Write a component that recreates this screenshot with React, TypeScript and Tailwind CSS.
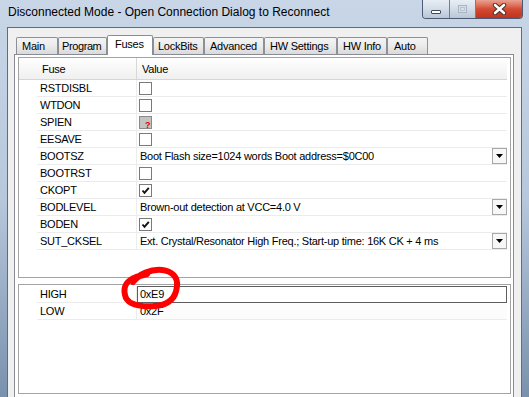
import React from 'react';

type FuseRow = {
  name: string;
  kind: 'check' | 'select' | 'unknown';
  checked?: boolean;
  text?: string;
};

const fuses: FuseRow[] = [
  { name: 'RSTDISBL', kind: 'check', checked: false },
  { name: 'WTDON', kind: 'check', checked: false },
  { name: 'SPIEN', kind: 'unknown' },
  { name: 'EESAVE', kind: 'check', checked: false },
  { name: 'BOOTSZ', kind: 'select', text: 'Boot Flash size=1024 words Boot address=$0C00' },
  { name: 'BOOTRST', kind: 'check', checked: false },
  { name: 'CKOPT', kind: 'check', checked: true },
  { name: 'BODLEVEL', kind: 'select', text: 'Brown-out detection at VCC=4.0 V' },
  { name: 'BODEN', kind: 'check', checked: true },
  { name: 'SUT_CKSEL', kind: 'select', text: 'Ext. Crystal/Resonator High Freq.; Start-up time: 16K CK + 4 ms' },
];

const tabs = [
  { label: 'Main', width: 'w-[42px] pl-[5px]' },
  { label: 'Program', width: 'w-[49px] pl-[3px] tracking-[-0.4px]' },
  { label: 'Fuses', width: 'w-[46px] pl-[7px]', active: true },
  { label: 'LockBits', width: 'w-[51px] pl-[4px]' },
  { label: 'Advanced', width: 'w-[60px] pl-[5px]' },
  { label: 'HW Settings', width: 'w-[73px] pl-[5px]' },
  { label: 'HW Info', width: 'w-[50px] pl-[5px]' },
  { label: 'Auto', width: 'w-[41px] pl-[6px]' },
];

const CheckBox: React.FC<{ checked?: boolean; unknown?: boolean }> = ({ checked, unknown }) => (
  <div
    className={`relative mt-[2px] ml-[2px] h-[13px] w-[13px] border ${
      unknown ? 'border-[#8a8a8a] bg-[#c3c3c3]' : 'border-[#7a7a7a] bg-white'
    }`}
  >
    {checked && (
      <svg width="11" height="11" viewBox="0 0 11 11" className="absolute left-0 top-0">
        <path d="M2.5 5.5 L4.5 7.8 L8.8 2.8" fill="none" stroke="#111" strokeWidth="1.9" />
      </svg>
    )}
    {unknown && (
      <span className="absolute left-[5px] top-[4px] text-[9px] font-bold leading-[9px] text-[#e00000]">?</span>
    )}
  </div>
);

const DropButton: React.FC = () => (
  <div className="flex h-[16px] w-[15px] shrink-0 items-center justify-center border border-[#a8a8a8] bg-[#f7f7f7]">
    <svg width="7" height="4" viewBox="0 0 7 4">
      <path d="M0 0 H7 L3.5 4 Z" fill="#000" />
    </svg>
  </div>
);

const GridRow: React.FC<{ name: string; children: React.ReactNode; plain?: boolean }> = ({ name, children, plain }) => (
  <div className="flex h-[17px]">
    <div className="w-[18px] shrink-0" />
    <div className="w-[99px] shrink-0 border-b border-[#ececec] pl-[3px] leading-[16px]">{name}</div>
    <div className="w-px shrink-0 bg-[#ececec]" />
    <div className={`relative w-[370px] shrink-0 ${plain ? '' : 'border-b border-[#ececec]'}`}>{children}</div>
  </div>
);

const App: React.FC = () => {
  return (
    <div className="relative h-[397px] w-[529px] overflow-hidden bg-gradient-to-b from-[#c8d6e7] via-[#b7c8dc] to-[#7a91ad] font-['Liberation_Sans',Arial,sans-serif] text-[11px] tracking-[-0.25px] text-black">
      {/* Title bar */}
      <div className="flex h-[27px]">
        <div className="flex-1 pl-[8px] pt-[4px] text-[12px] leading-[17px] tracking-normal text-black">
          Disconnected Mode - Open Connection Dialog to Reconnect
        </div>
        <div className="mr-[6px] flex h-[19px] overflow-hidden rounded-b-[4px] border border-t-0 border-[#4a5a70]">
          <div className="flex w-[27px] items-center justify-center border-r border-[#6f7f94] bg-gradient-to-b from-[#e8eef5] via-[#d3dce8] to-[#b9c6d6]">
            <div className="mt-[5px] h-[4px] w-[10px] rounded-[1px] border border-[#3d4a5c] bg-white" />
          </div>
          <div className="flex w-[26px] items-center justify-center border-r border-[#6f7f94] bg-gradient-to-b from-[#e8eef5] via-[#d3dce8] to-[#b9c6d6]">
            <div className="h-[8px] w-[9px] border border-[#a9b5c4] bg-[#d7dfe9]">
              <div className="m-[1px] h-[4px] border border-[#b9c3cf]" />
            </div>
          </div>
          <div className="flex w-[46px] items-center justify-center bg-gradient-to-b from-[#e9a292] via-[#d44a33] to-[#c0321c]">
            <svg width="15" height="12" viewBox="0 0 15 12">
              <path d="M3 2 L12 10 M12 2 L3 10" stroke="#4a2a24" strokeWidth="4.4" strokeLinecap="round" />
              <path d="M3 2 L12 10 M12 2 L3 10" stroke="#ffffff" strokeWidth="2.6" strokeLinecap="round" />
            </svg>
          </div>
        </div>
      </div>

      {/* Client area */}
      <div className="mx-[7px] h-[370px] border border-b-0 border-[#5d6e84] bg-[#f0f0f0] pl-[6px] pt-[7px]">
        {/* Tabs */}
        <div className="ml-[2px] flex h-[19px] items-end">
          {tabs.map((t) =>
            t.active ? (
              <div
                key={t.label}
                className={`relative z-10 mb-[-1px] h-[20px] ${t.width} shrink-0 rounded-t-[2px] border border-b-0 border-[#898c95] bg-white leading-[17px]`}
              >
                {t.label}
              </div>
            ) : (
              <div
                key={t.label}
                className={`h-[17px] ${t.width} shrink-0 whitespace-nowrap rounded-t-[2px] border border-b-0 border-[#8e9096] bg-gradient-to-b from-[#f4f4f4] via-[#ebebeb] to-[#dadada] leading-[16px]`}
              >
                {t.label}
              </div>
            )
          )}
        </div>

        {/* Tab page */}
        <div className="h-[350px] w-[500px] border border-[#898c95] bg-white pl-[3px] pt-[2px]">
          {/* Fuse grid */}
          <div className="h-[221px] w-[493px] border border-[#a3a3a3] bg-white">
            <div className="flex h-[22px] w-[488px] border-b border-[#d5d5d5] bg-gradient-to-b from-white via-[#f7f7f7] to-[#f0f0f0] leading-[23px]">
              <div className="w-[117px] shrink-0 pl-[23px]">Fuse</div>
              <div className="w-px shrink-0 bg-[#d8d8d8]" />
              <div className="pl-[5px]">Value</div>
            </div>
            {fuses.map((f) => (
              <GridRow key={f.name} name={f.name}>
                {f.kind === 'check' && <CheckBox checked={f.checked} />}
                {f.kind === 'unknown' && <CheckBox unknown />}
                {f.kind === 'select' && (
                  <div className="flex h-[16px] items-center">
                    <span className="flex-1 pl-[3px] leading-[16px]">{f.text}</span>
                    <DropButton />
                  </div>
                )}
              </GridRow>
            ))}
          </div>

          {/* Fuse bytes */}
          <div className="mt-[6px] h-[110px] w-[493px] border border-[#a3a3a3] bg-white pt-px">
            <GridRow name="HIGH" plain>
              <div className="h-[17px] border border-[#5e5e5e] pl-[2px] leading-[15px]">0xE9</div>
            </GridRow>
            <GridRow name="LOW">
              <div className="h-[16px] bg-[#fcfcfc] pl-[3px] leading-[16px]">0x2F</div>
            </GridRow>
          </div>
        </div>
      </div>

      {/* Hand-drawn red mark */}
      <svg className="pointer-events-none absolute left-0 top-0" width="529" height="397" viewBox="0 0 529 397">
        <path
          d="M133 282 C139 274 151 269 162 270 C172 271 178 277 177 286 C176 297 170 305 155 306 C140 307 127 305 125 295 C123 287 127 280 136 277 L147 274"
          fill="none"
          stroke="#ff0000"
          strokeWidth="6"
          strokeLinecap="round"
          strokeLinejoin="round"
        />
      </svg>
    </div>
  );
};

export default App;
